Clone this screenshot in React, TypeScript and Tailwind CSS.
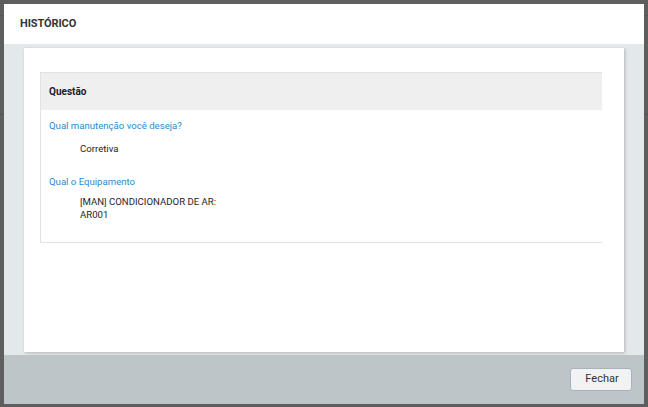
import React from 'react';

const font = { fontFamily: 'Roboto, "Noto Sans", sans-serif' };

interface Answer {
  question: string;
  lines: string[];
}

const answers: Answer[] = [
  { question: 'Qual manutenção você deseja?', lines: ['Corretiva'] },
  { question: 'Qual o Equipamento', lines: ['[MAN] CONDICIONADOR DE AR:', 'AR001'] },
];

const App: React.FC = () => {
  return (
    <div className="relative w-[648px] h-[407px] bg-[#5e5e5e] overflow-hidden" style={font}>
      {/* backdrop page lines behind the overlay */}
      <div className="absolute left-0 right-0 top-[15px] h-px bg-[#545454]" />
      <div className="absolute left-0 right-0 top-[114px] h-px bg-[#545454]" />

      <div className="absolute left-[4px] top-[4px] w-[640px] h-[400px] flex flex-col">
        <div className="h-[40px] bg-white flex items-center pl-[16px]">
          <h1 className="text-[11px] font-bold text-[#333] tracking-[-0.1px]">HISTÓRICO</h1>
        </div>

        <div className="flex-1 bg-[#e3e8ea] px-[20px] pt-[4px] pb-[3px]">
          <div className="h-full bg-white shadow-[1px_1px_3px_rgba(0,0,0,0.22)] pl-[16px] pr-[22px] pt-[24px]">
            <div className="border-l border-t border-[#e2e2e2]">
              <div className="h-[37px] bg-[#efefef] flex items-center pl-[8px]">
                <span className="text-[10px] font-bold text-[#222]">Questão</span>
              </div>
              <div className="border-b border-[#e2e2e2] pl-[8px] pt-[9px] pb-[21px] text-[9.6px] leading-[13px]">
                {answers.map((a, i) => (
                  <div key={i} className={i > 0 ? 'mt-[20px]' : ''}>
                    <p className="text-[#2a8ccd]">{a.question}</p>
                    <div className={`pl-[31px] text-[#1e1e1e] ${i === 0 ? 'mt-[10px]' : 'mt-[7px]'}`}>
                      {a.lines.map((l, j) => (
                        <p key={j}>{l}</p>
                      ))}
                    </div>
                  </div>
                ))}
              </div>
            </div>
          </div>
        </div>

        <div className="h-[49px] bg-[#bec5c8] flex items-center justify-end pr-[12px]">
          <button className="w-[62px] h-[23px] rounded-[3px] border border-[#a3b3c2] bg-[#f2f2f2] text-[11px] text-[#333] pl-[2px]">
            Fechar
          </button>
        </div>
      </div>
    </div>
  );
};

export default App;
